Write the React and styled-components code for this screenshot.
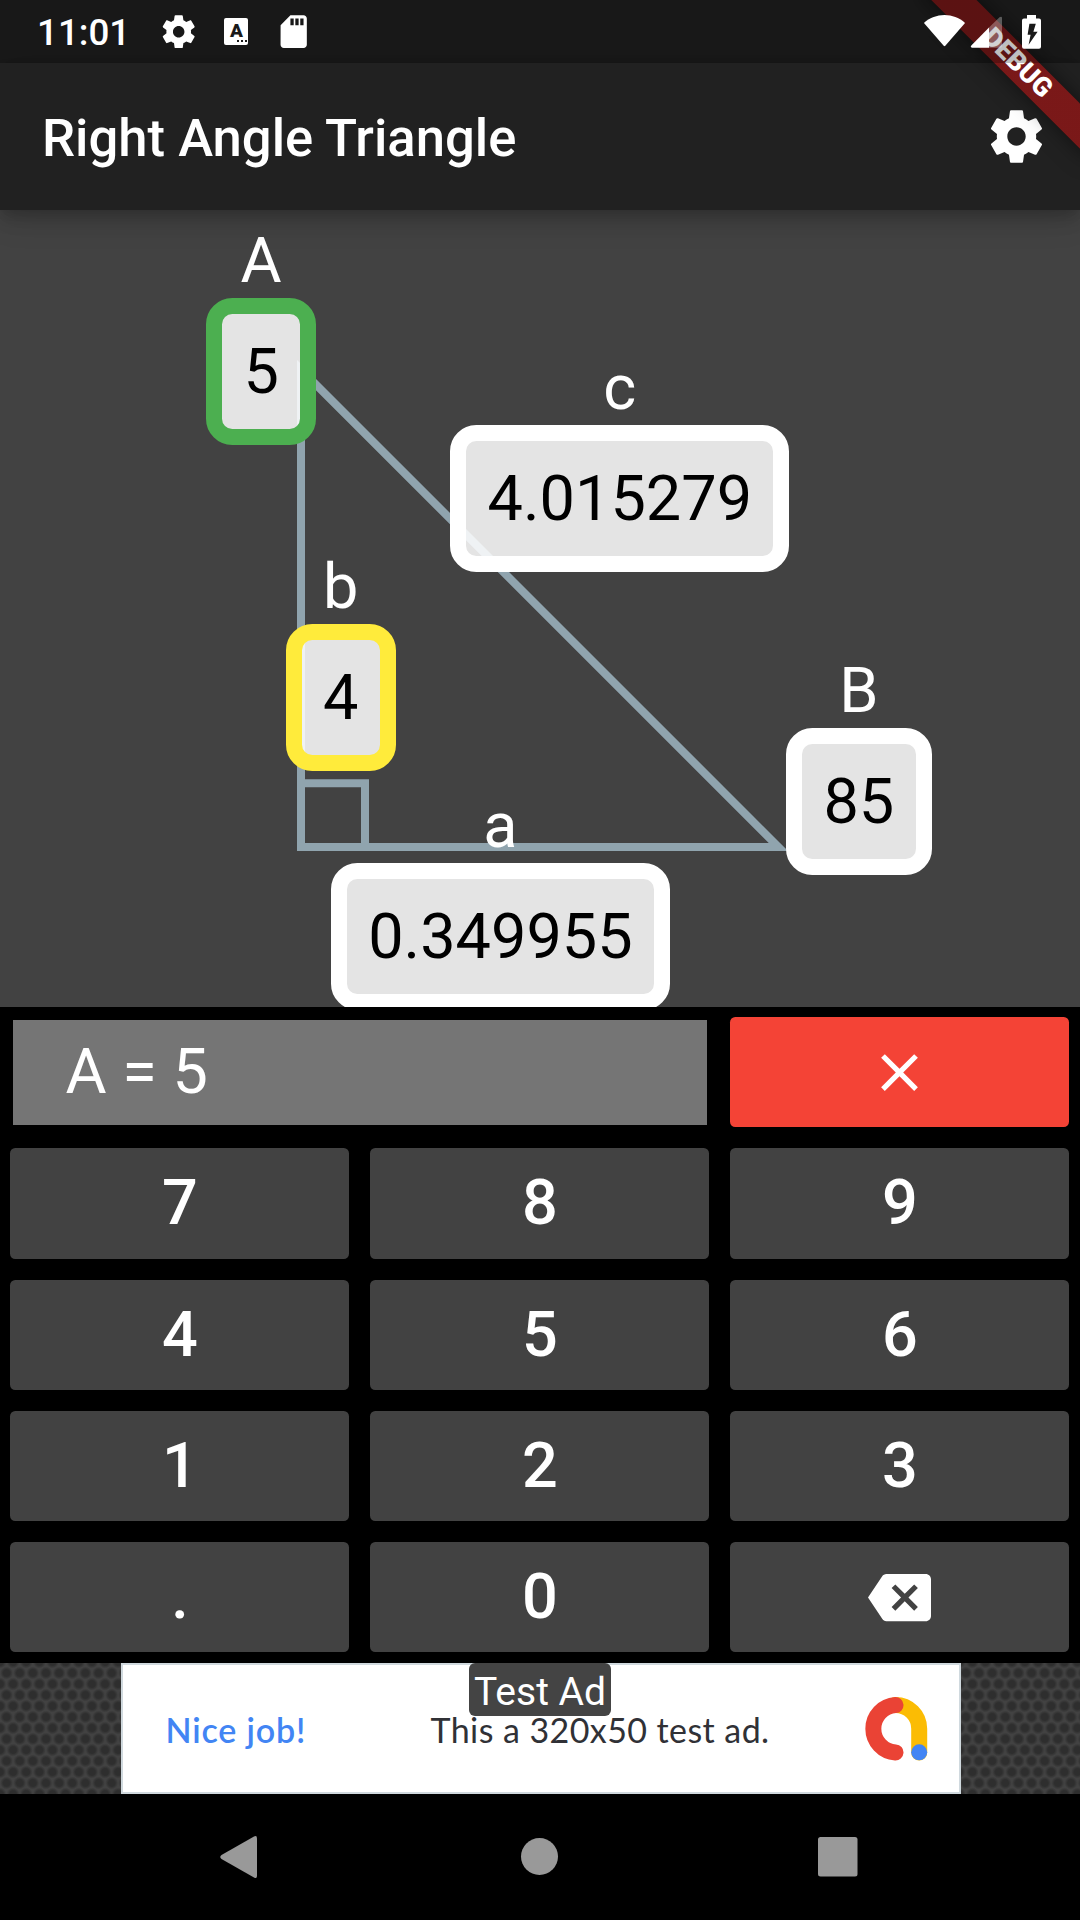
import React from "react";
import styled, { createGlobalStyle } from "styled-components";
import { MdBackspace, MdClose, MdSdCard } from "react-icons/md";

const GlobalStyle = createGlobalStyle`
  *, *::before, *::after { box-sizing: border-box; }
  body { margin: 0; background: #000; }
`;

const Screen = styled.div`
  position: relative;
  display: flex;
  flex-direction: column;
  width: 1080px;
  height: 1920px;
  overflow: hidden;
  background: #212121;
  color: #fff;
  font-family: Roboto, "Liberation Sans", sans-serif;
`;

/* ---------- status bar ---------- */

const StatusBar = styled.div`
  position: relative;
  z-index: 3;
  flex: none;
  display: flex;
  align-items: center;
  justify-content: space-between;
  height: 63px;
  padding: 0 39px 0 37px;
  background: rgba(0, 0, 0, 0.25);
`;

const StatusGroup = styled.div`
  display: flex;
  align-items: center;
`;

const Clock = styled.span`
  width: 121.5px;
  padding-top: 2px;
  font-size: 36.75px;
  font-weight: 500;
  line-height: 43px;
`;

const KeyboardIcon = styled.span`
  display: flex;
  flex-direction: column;
  align-items: center;
  width: 24px;
  height: 27px;
  margin: 0 26px 0 26.5px;
  border-radius: 2px;
  background: #fff;
  color: #191919;
  font-size: 19px;
  font-weight: 900;
  line-height: 25px;
`;

const KeyboardDots = styled.span`
  align-self: flex-end;
  width: 10px;
  height: 2px;
  margin: -3px 1px 0 0;
  background: repeating-linear-gradient(90deg, #191919 0 2px, transparent 2px 4px);
`;

/* ---------- app bar ---------- */

const AppBar = styled.header`
  position: relative;
  z-index: 1;
  flex: none;
  display: flex;
  align-items: center;
  justify-content: space-between;
  height: 147px;
  padding: 0 32px 0 42px;
  background: #212121;
  box-shadow: 0 5px 10px -3px rgba(0, 0, 0, 0.1), 0 10px 16px rgba(0, 0, 0, 0.12),
    0 6px 34px rgba(0, 0, 0, 0.14);
`;

const Title = styled.h1`
  margin: 0;
  padding-top: 2px;
  font-size: 52.6px;
  font-weight: 500;
  line-height: 62px;
`;

const DebugBanner = styled.div`
  position: absolute;
  z-index: 2;
  top: 47px;
  left: 897.3px;
  width: 240px;
  height: 31.5px;
  transform: rotate(45deg);
  background: linear-gradient(rgba(183, 28, 28, 0.63), rgba(183, 28, 28, 0.63)),
    linear-gradient(rgba(0, 0, 0, 0.45), rgba(0, 0, 0, 0.45));
  box-shadow: 0 0 21px rgba(0, 0, 0, 0.5);
  font-size: 26.8px;
  font-weight: 900;
  line-height: 31px;
  text-align: center;
  text-indent: 1px;
`;

/* ---------- triangle diagram ---------- */

const Diagram = styled.main`
  position: relative;
  flex: none;
  height: 796.5px;
  overflow: hidden;
  background: #424242;
`;

const TriangleDrawing = styled.svg`
  display: block;
  fill: none;
  stroke: #90a4ae;
  stroke-width: 8;
`;

const Node = styled.label`
  position: absolute;
  left: ${(p) => p.$x}px;
  top: ${(p) => p.$y}px;
  display: flex;
  flex-direction: column;
  align-items: center;
  font-size: 63px;
  line-height: 74px;
`;

const NodeValue = styled.span`
  height: 147px;
  padding: 21px 21.4px 20px;
  border: 16px solid ${(p) => p.$ring};
  border-radius: 26.25px;
  background: rgba(255, 255, 255, 0.86);
  color: #000;
`;

/* ---------- keypad ---------- */

const Keypad = styled.section`
  flex: none;
  display: grid;
  grid-template-columns: repeat(3, 1fr);
  grid-auto-rows: 110.25px;
  gap: 21px;
  height: 656.25px;
  padding: 10.5px 10.6px 10.5px 10.4px;
  background: #000;
`;

const Display = styled.output`
  grid-column: span 2;
  display: flex;
  align-items: center;
  margin: 2.625px;
  padding-left: 52.5px;
  background: #757575;
  font-size: 63px;
  line-height: 74px;
`;

const Key = styled.button`
  display: flex;
  align-items: center;
  justify-content: center;
  padding: 0;
  border: 0;
  border-radius: 5.25px;
  background: ${(p) => (p.$danger ? "#f44336" : "#424242")};
  color: #fff;
  font-family: inherit;
  font-size: 63px;
  font-weight: 500;
  line-height: 74px;
`;

/* ---------- ad ---------- */

const AdStrip = styled.aside`
  flex: none;
  display: flex;
  justify-content: center;
  height: 131.25px;
  padding-left: 2px;
  background-color: #424242;
  background-image: radial-gradient(circle, #2e2e2e 0 3.4px, rgba(46, 46, 46, 0) 6.4px),
    radial-gradient(circle, #2e2e2e 0 3.4px, rgba(46, 46, 46, 0) 6.4px);
  background-size: 13.15px 22px;
  background-position: 0 -1px, 6.5px 10px;
`;

const AdCard = styled.div`
  position: relative;
  display: flex;
  align-items: center;
  width: 840px;
  padding-top: 2px;
  border: 2.6px solid #d0d9de;
  background: #fff;
  font-family: Lato, "Open Sans", sans-serif;
  font-size: 34px;
  line-height: 40px;
  white-space: nowrap;
`;

const AdHeadline = styled.span`
  width: 265px;
  padding-top: 1px;
  margin-left: 42.5px;
  color: #4285f4;
  font-weight: 600;
  letter-spacing: 0.85px;
`;

const AdBody = styled.span`
  width: 433px;
  padding-top: 1px;
  color: #303136;
  letter-spacing: 0.42px;
`;

const AdTag = styled.span`
  position: absolute;
  top: -2px;
  left: 346px;
  width: 142px;
  height: 53px;
  border-radius: 6px;
  background: #444;
  font-family: Roboto, sans-serif;
  font-size: 39px;
  line-height: 58px;
  text-align: center;
`;

/* ---------- navigation bar ---------- */

const NavBar = styled.nav`
  flex: none;
  display: flex;
  align-items: center;
  justify-content: center;
  gap: 246px;
  height: 126px;
  background: #000;

  svg {
    fill: #999;
  }
`;

const GearIcon = ({ size }) => (
  <svg width={size} height={size} viewBox="0 0 24 24" fill="#fff">
    <path d="M19.43 12.98c.04-.32.07-.64.07-.98s-.03-.66-.07-.98l2.11-1.65c.19-.15.24-.42.12-.64l-2-3.46c-.12-.22-.39-.3-.61-.22l-2.49 1c-.52-.4-1.08-.73-1.69-.98l-.38-2.65C14.46 2.18 14.25 2 14 2h-4c-.25 0-.46.18-.49.42l-.38 2.65c-.61.25-1.17.59-1.69.98l-2.49-1c-.23-.09-.49 0-.61.22l-2 3.46c-.13.22-.07.49.12.64l2.11 1.65c-.04.32-.07.65-.07.98s.03.66.07.98l-2.11 1.65c-.19.15-.24.42-.12.64l2 3.46c.12.22.39.3.61.22l2.49-1c.52.4 1.08.73 1.69.98l.38 2.65c.03.24.24.42.49.42h4c.25 0 .46-.18.49-.42l.38-2.65c.61-.25 1.17-.59 1.69-.98l2.49 1c.23.09.49 0 .61-.22l2-3.46c.12-.22.07-.49-.12-.64l-2.11-1.65zM12 15.5c-1.93 0-3.5-1.57-3.5-3.5s1.57-3.5 3.5-3.5 3.5 1.57 3.5 3.5-1.57 3.5-3.5 3.5z" />
  </svg>
);

const SignalIcons = () => (
  <svg width="117" height="34" viewBox="0 0 117 34" fill="#fff">
    <path d="M0.3 7.4C6 2.8 12.8 0 20.5 0S35 2.8 40.6 7.4Q41 7.8 40.6 8.4L21.3 30.8Q20.5 31.7 19.7 30.8L0.4 8.4Q0 7.8 0.3 7.4Z" />
    <path d="M65 12.5V32.7H48Q46 32.4 47.3 30.6Z" />
    <path d="M65 12.5L75.5 2.2Q78 1 78 3V31Q78 32.7 76 32.7H65Z" opacity="0.3" />
    <path d="M103 0h9v3.4h3q2 0 2 2V31.7q0 2-2 2H100q-2 0-2-2V5.4q0-2 2-2h3Z" />
    <path d="M105.4 8.8h6.4l-2.4 8h4.2l-9 13 2-10h-3Z" fill="#191919" />
  </svg>
);

const AdLogo = () => (
  <svg width="64" height="64" viewBox="0 0 64 64" fill="none" strokeWidth="16" strokeLinecap="round">
    <path d="M31.5 8A23.7 23.7 0 0 1 55.2 31.7V55.5" stroke="#fbbc04" />
    <path d="M31.5 8.1A23.7 23.7 0 0 0 31.5 55.4" stroke="#ea4335" />
    <circle cx="55.2" cy="55.3" r="8" fill="#4285f4" />
  </svg>
);

const FIELDS = [
  { name: "A", value: "5", x: 206, y: 13.7, ring: "#4caf50" },
  { name: "b", value: "4", x: 285.5, y: 340.2, ring: "#ffeb3b" },
  { name: "c", value: "4.015279", x: 450.2, y: 141, ring: "#fff" },
  { name: "a", value: "0.349955", x: 330.8, y: 579, ring: "#fff" },
  { name: "B", value: "85", x: 786, y: 444, ring: "#fff" },
];

const KEYS = ["7", "8", "9", "4", "5", "6", "1", "2", "3", ".", "0"];

export default function App() {
  return (
    <>
      <GlobalStyle />
      <Screen>
        <StatusBar>
          <StatusGroup>
            <Clock>11:01</Clock>
            <GearIcon size={39.4} />
            <KeyboardIcon>
              A<KeyboardDots />
            </KeyboardIcon>
            <MdSdCard size={39.4} />
          </StatusGroup>
          <StatusGroup>
            <SignalIcons />
          </StatusGroup>
        </StatusBar>

        <AppBar>
          <Title>Right Angle Triangle</Title>
          <GearIcon size={63} />
        </AppBar>
        <DebugBanner>DEBUG</DebugBanner>

        <Diagram>
          <TriangleDrawing width="1080" height="796" viewBox="0 210 1080 796">
            <path d="M301 369.6V847H778.4Z" strokeMiterlimit="10" />
            <path d="M305 783.3H365V843" />
          </TriangleDrawing>
          {FIELDS.map((f) => (
            <Node key={f.name} $x={f.x} $y={f.y}>
              {f.name}
              <NodeValue $ring={f.ring}>{f.value}</NodeValue>
            </Node>
          ))}
        </Diagram>

        <Keypad>
          <Display>A = 5</Display>
          <Key $danger aria-label="Clear">
            <MdClose size={63} />
          </Key>
          {KEYS.map((k) => (
            <Key key={k}>{k}</Key>
          ))}
          <Key aria-label="Backspace">
            <MdBackspace size={63} />
          </Key>
        </Keypad>

        <AdStrip>
          <AdCard>
            <AdHeadline>Nice job!</AdHeadline>
            <AdBody>This a 320x50 test ad.</AdBody>
            <AdLogo />
            <AdTag>Test Ad</AdTag>
          </AdCard>
        </AdStrip>

        <NavBar>
          <svg width="52" height="52" viewBox="0 0 52 52">
            <path d="M5.5 24Q3 26 5.5 28L38 46.5Q41 48 41 45V7.5Q41 4 38 5.5Z" />
          </svg>
          <svg width="52" height="52" viewBox="0 0 52 52">
            <circle cx="25.5" cy="25.5" r="18.5" />
          </svg>
          <svg width="52" height="52" viewBox="0 0 52 52">
            <rect x="6" y="6" width="39.5" height="39.5" rx="2.5" />
          </svg>
        </NavBar>
      </Screen>
    </>
  );
}
